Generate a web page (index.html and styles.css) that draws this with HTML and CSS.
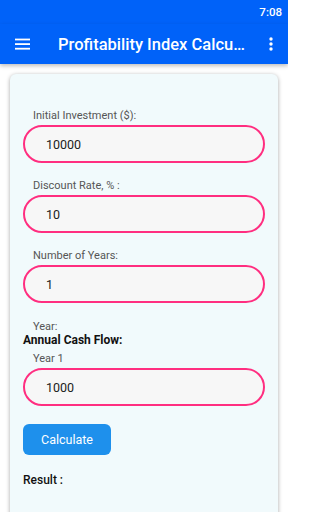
FILE: index.html
```html
<!DOCTYPE html>
<html>
<head>
<meta charset="utf-8">
<link rel="stylesheet" href="styles.css">
</head>
<body>
<div class="status"><span class="time">7:08</span></div>
<header class="appbar">
  <svg class="menu" width="15" height="12" viewBox="0 0 15 12"><rect x="0" y="0.6" width="15" height="1.8" fill="#fff"/><rect x="0" y="5.2" width="15" height="1.8" fill="#fff"/><rect x="0" y="9.8" width="15" height="1.8" fill="#fff"/></svg>
  <div class="title">Profitability Index Calculator</div>
  <svg class="dots" width="4" height="14" viewBox="0 0 4 14"><circle cx="2" cy="2" r="1.7" fill="#fff"/><circle cx="2" cy="7" r="1.7" fill="#fff"/><circle cx="2" cy="12" r="1.7" fill="#fff"/></svg>
</header>
<main class="card">
  <div class="group">
    <label class="label">Initial Investment ($):</label>
    <div class="field">10000</div>
  </div>
  <div class="group">
    <label class="label">Discount Rate, % :</label>
    <div class="field">10</div>
  </div>
  <div class="group">
    <label class="label">Number of Years:</label>
    <div class="field">1</div>
  </div>
  <div class="year">Year:</div>
  <div class="heading">Annual Cash Flow:</div>
  <div class="group last">
    <label class="label">Year 1</label>
    <div class="field">1000</div>
  </div>
  <button class="calc">Calculate</button>
  <div class="result">Result :</div>
</main>
</body>
</html>
```
FILE: styles.css
```css
* { box-sizing: border-box; }
html, body { margin: 0; padding: 0; }
body {
  width: 288px;
  height: 512px;
  overflow: hidden;
  background: #ffffff;
  font-family: Roboto, "Noto Sans", sans-serif;
}
.status {
  height: 24px;
  background: #0062f9;
  display: flex;
  justify-content: flex-end;
  align-items: center;
  padding-right: 6px;
}
.time {
  color: #fff;
  font-size: 11.5px;
  font-weight: 500;
}
.appbar {
  height: 40px;
  background: #0062f9;
  display: flex;
  align-items: center;
  padding-left: 15px;
  box-shadow: 0 2px 4px rgba(0,0,0,0.25);
  position: relative;
  z-index: 2;
}
.menu { flex: none; }
.title {
  margin-left: 28px;
  width: 191px;
  flex: none;
  color: #fff;
  font-size: 16.5px;
  font-weight: 500;
  white-space: nowrap;
  overflow: hidden;
  text-overflow: ellipsis;
}
.dots { flex: none; margin-left: 20px; }
.card {
  margin: 10px 10px 0;
  height: 460px;
  background: #f1fafc;
  border-radius: 6px;
  box-shadow: 0 1px 4px rgba(0,0,0,0.35);
  padding: 35px 13px 0;
  display: flex;
  flex-direction: column;
  align-items: flex-start;
}
.group {
  width: 100%;
  display: flex;
  flex-direction: column;
  margin-bottom: 16px;
}
.group.last { margin-bottom: 18px; }
.label {
  margin-left: 10px;
  font-size: 11px;
  line-height: 14px;
  color: #555;
  margin-bottom: 2px;
}
.field {
  height: 38px;
  border: 2px solid #ff2e80;
  border-radius: 20px;
  background: #f7f7f7;
  padding-left: 21px;
  display: flex;
  align-items: center;
  font-size: 12.5px;
  color: #222;
}
.year {
  margin-left: 10px;
  font-size: 11px;
  line-height: 13px;
  color: #555;
  margin-top: 1px;
}
.heading {
  font-size: 12px;
  font-weight: 700;
  line-height: 15px;
  color: #111;
  margin-bottom: 4px;
}
.calc {
  width: 88px;
  height: 31px;
  border: none;
  border-radius: 6px;
  background: #1e90ec;
  color: #fff;
  font-family: Roboto, sans-serif;
  font-size: 12.5px;
  padding: 0;
}
.result {
  margin-top: 18px;
  font-size: 12px;
  font-weight: 500;
  color: #111;
}
```
